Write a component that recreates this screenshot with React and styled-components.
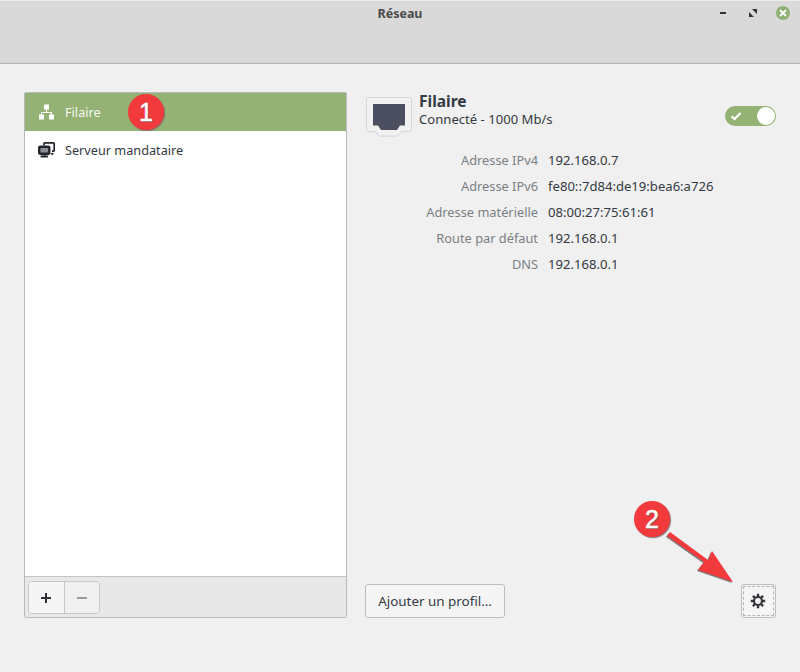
import React from 'react';
import styled, { createGlobalStyle } from 'styled-components';

const Global = createGlobalStyle`
  html, body { margin: 0; padding: 0; background: #f0f0f0; }
  #root { width: 800px; height: 672px; }
  * { box-sizing: border-box; }
`;

const Window = styled.div`
  position: relative;
  width: 800px;
  height: 672px;
  overflow: hidden;
  background: #f0f0f0;
  display: flex;
  flex-direction: column;
  font-family: "Noto Sans", "Open Sans", sans-serif;
  font-size: 13px;
  color: #333a44;
`;

const TitleBar = styled.header`
  position: relative;
  flex: 0 0 64px;
  background: #d9d9d9;
  border-top: 1px solid #ececec;
  border-bottom: 1px solid #b5b5b5;
  padding-top: 4px;
  text-align: center;
  font-size: 12.5px;
  font-weight: 700;
  line-height: 17px;
  color: #4a4a4a;
`;

const WindowControls = styled.div`
  position: absolute;
  top: 4px;
  right: 10px;
  display: flex;
  align-items: center;
  gap: 16px;
`;

const ControlSlot = styled.span`
  width: 14px;
  height: 16px;
  display: flex;
  align-items: center;
  justify-content: center;
`;

const CloseSlot = styled.span`
  width: 14px;
  height: 14px;
  border-radius: 50%;
  background: #8fb174;
  display: flex;
  align-items: center;
  justify-content: center;
`;

const Body = styled.main`
  flex: 1;
  display: flex;
  gap: 18px;
  padding: 28px 24px 54px;
`;

const Sidebar = styled.aside`
  width: 323px;
  display: flex;
  flex-direction: column;
  border: 1px solid #b9b9b9;
  border-radius: 2px;
  background: #fff;
`;

const List = styled.ul`
  flex: 1;
  list-style: none;
  margin: 0;
  padding: 0;
`;

const Row = styled.li`
  height: 38px;
  display: flex;
  align-items: center;
  gap: 10px;
  padding-left: 13px;
  background: ${p => (p.$selected ? '#93b273' : 'transparent')};
  color: ${p => (p.$selected ? '#f5f8f1' : '#333a44')};
  font-size: 12.7px;
`;

const Toolbar = styled.div`
  flex: 0 0 41px;
  display: flex;
  align-items: center;
  padding: 1px 3px 0;
  background: #e8e8e8;
  border-top: 1px solid #c4c4c4;
`;

const ButtonGroup = styled.div`
  display: flex;
  height: 33px;
  border: 1px solid #c8c8c8;
  border-radius: 4px;
  overflow: hidden;
`;

const ToolButton = styled.button`
  width: ${p => (p.$muted ? '34px' : '36px')};
  padding: ${p => (p.$muted ? '0' : '0 2px 0 0')};
  border: 0;
  border-right: ${p => (p.$muted ? '0' : '1px solid #c4c4c4')};
  background: ${p => (p.$muted ? '#f0f0f0' : '#f5f5f5')};
  display: flex;
  align-items: center;
  justify-content: center;
`;

const Panel = styled.section`
  flex: 1;
  display: flex;
  flex-direction: column;
`;

const Header = styled.div`
  display: flex;
  align-items: flex-start;
  padding-left: 1px;
  padding-top: 5px;
  height: 56px;
`;

const HeaderText = styled.div`
  margin-left: 7px;
  flex: 1;
  margin-top: -5px;
`;

const HeaderTitle = styled.div`
  font-size: 15.5px;
  font-weight: 700;
  line-height: 19px;
  color: #333a44;
`;

const HeaderStatus = styled.div`
  font-size: 13.1px;
  line-height: 16px;
`;

const Switch = styled.div`
  margin-top: 9px;
  width: 51px;
  height: 20px;
  border-radius: 10px;
  background: #93b273;
  display: flex;
  align-items: center;
  justify-content: space-between;
  padding: 0 1px 0 5px;
`;

const Knob = styled.span`
  width: 18px;
  height: 18px;
  border-radius: 50%;
  background: #fff;
`;

const Details = styled.dl`
  margin: 0;
  margin-top: -1px;
  display: grid;
  grid-template-columns: 173px auto;
  grid-auto-rows: 26px;
  column-gap: 10px;
  align-items: center;
  justify-content: start;
`;

const Label = styled.dt`
  text-align: right;
  color: #7b7f84;
  font-size: 12.8px;
`;

const Value = styled.dd`
  margin: 0;
  font-size: 13.1px;
  color: #333a44;
`;

const Footer = styled.div`
  margin-top: auto;
  display: flex;
  justify-content: space-between;
`;

const TextButton = styled.button`
  width: 140px;
  height: 34px;
  padding: 0;
  border: 1px solid #bdbdbd;
  border-radius: 3px;
  background: #f5f5f5;
  font-family: inherit;
  font-size: 13.4px;
  color: #333a44;
`;

const GearButton = styled.button`
  width: 35px;
  height: 34px;
  padding: 0 1px 0 0;
  border: 1px solid #bdbdbd;
  border-radius: 3px;
  background: #f5f5f5;
  display: flex;
  align-items: center;
  justify-content: center;
  outline: 1px dashed #b5b5b5;
  outline-offset: -3px;
`;

const Badge = styled.div`
  position: absolute;
  left: ${p => p.$x - 18}px;
  top: ${p => p.$y - 18}px;
  width: 36px;
  height: 36px;
  border-radius: 50%;
  background: #f23a3c;
  box-shadow: 1px 1px 1px #8a6a6a;
  display: flex;
  align-items: center;
  justify-content: center;
  font-family: "Liberation Sans", Arial, sans-serif;
  font-size: 25px;
  font-weight: 400;
  -webkit-text-stroke: 0.5px #fff;
  color: #fff;
  text-shadow: 1px 1px 1px #7d5050;
`;

const ArrowLayer = styled.svg`
  position: absolute;
  left: 660px;
  top: 525px;
`;

const NetworkIcon = () => (
  <svg width="17" height="16" viewBox="0 0 17 16" fill="#fff">
    <rect x="6" y="0.5" width="5" height="5" />
    <rect x="1" y="10.5" width="5" height="5" />
    <rect x="11" y="10.5" width="5" height="5" />
    <path d="M8 5h1v3h5v3h-1V9H4v2H3V8h5z" />
  </svg>
);

const ProxyIcon = () => (
  <svg width="17" height="16" viewBox="0 0 17 16" fill="none">
    <path d="M6 3.5V1.8A1 1 0 0 1 7 .8h8.2a1 1 0 0 1 1 1v6.4a1 1 0 0 1-1 1H14" stroke="#22252b" strokeWidth="1.7" />
    <rect x="1.2" y="4.7" width="10.1" height="7.1" rx="1" fill="#8b8e94" stroke="#22252b" strokeWidth="2.4" />
    <rect x="4.5" y="12" width="3.5" height="1.5" fill="#22252b" />
    <rect x="2.5" y="13.5" width="7.5" height="2" rx="0.5" fill="#22252b" />
    <path d="M12.5 11h3.5l-1.7 2.6z" fill="#22252b" />
  </svg>
);

const EthernetIcon = () => (
  <svg width="46" height="40" viewBox="0 0 46 40">
    <path
      d="M3 .5h40a2.5 2.5 0 0 1 2.5 2.5v29a2.5 2.5 0 0 1-2.5 2.5h-7.5l-3 4a1.5 1.5 0 0 1-1.2.6H13.7a1.5 1.5 0 0 1-1.2-.6l-3-4H3A2.5 2.5 0 0 1 .5 32V3A2.5 2.5 0 0 1 3 .5z"
      fill="#f2f2f2"
      stroke="#d2d6e0"
    />
    <path d="M7 7h32v21.5h-5l-3 4.5H15l-3-4.5H7z" fill="#4b4f5f" />
  </svg>
);

const CheckIcon = () => (
  <svg width="12" height="10" viewBox="0 0 12 10" fill="none">
    <path d="M1.5 5.2 4.5 8l6-6" stroke="#fff" strokeWidth="2.2" />
  </svg>
);

const PlusIcon = ({ color, plus }) => (
  <svg width="12" height="12" viewBox="0 0 12 12" fill={color}>
    <rect x="1" y="5" width="10" height="2" />
    {plus && <rect x="5" y="1" width="2" height="10" />}
  </svg>
);

const GearIcon = () => (
  <svg width="16" height="16" viewBox="0 0 16 16" fill="none" stroke="#33363b">
    <circle cx="8" cy="8" r="4" strokeWidth="2.2" />
    <g strokeWidth="2.4">
      <path d="M8 .8v3M8 12.2v3M.8 8h3M12.2 8h3" />
      <path d="M2.9 2.9l2.1 2.1M11 11l2.1 2.1M13.1 2.9L11 5M5 11l-2.1 2.1" />
    </g>
  </svg>
);

const MinimizeIcon = () => (
  <svg width="8" height="3" viewBox="0 0 8 3"><rect width="6" height="2" x="1" fill="#333" /></svg>
);

const MaximizeIcon = () => (
  <svg width="8" height="8" viewBox="0 0 8 8" fill="#333">
    <path d="M3 0h5v5zM0 3l5 5H0z" />
  </svg>
);

const CloseIcon = () => (
  <svg width="8" height="8" viewBox="0 0 8 8"><path d="M1 1l6 6M7 1 1 7" stroke="#fff" strokeWidth="1.8" /></svg>
);

const details = [
  ['Adresse IPv4', '192.168.0.7'],
  ['Adresse IPv6', 'fe80::7d84:de19:bea6:a726'],
  ['Adresse matérielle', '08:00:27:75:61:61'],
  ['Route par défaut', '192.168.0.1'],
  ['DNS', '192.168.0.1'],
];

export default function App() {
  return (
    <Window>
      <Global />
      <TitleBar>
        Réseau
        <WindowControls>
          <ControlSlot><MinimizeIcon /></ControlSlot>
          <ControlSlot><MaximizeIcon /></ControlSlot>
          <CloseSlot><CloseIcon /></CloseSlot>
        </WindowControls>
      </TitleBar>
      <Body>
        <Sidebar>
          <List>
            <Row $selected><NetworkIcon />Filaire</Row>
            <Row><ProxyIcon />Serveur mandataire</Row>
          </List>
          <Toolbar>
            <ButtonGroup>
              <ToolButton><PlusIcon color="#2e3138" plus /></ToolButton>
              <ToolButton $muted><PlusIcon color="#9a9a9a" /></ToolButton>
            </ButtonGroup>
          </Toolbar>
        </Sidebar>
        <Panel>
          <Header>
            <EthernetIcon />
            <HeaderText>
              <HeaderTitle>Filaire</HeaderTitle>
              <HeaderStatus>Connecté - 1000 Mb/s</HeaderStatus>
            </HeaderText>
            <Switch><CheckIcon /><Knob /></Switch>
          </Header>
          <Details>
            {details.map(([k, v]) => (
              <React.Fragment key={k}>
                <Label>{k}</Label>
                <Value>{v}</Value>
              </React.Fragment>
            ))}
          </Details>
          <Footer>
            <TextButton>Ajouter un profil…</TextButton>
            <GearButton><GearIcon /></GearButton>
          </Footer>
        </Panel>
      </Body>
      <Badge $x={146} $y={112}>1</Badge>
      <Badge $x={652} $y={519}>2</Badge>
      <ArrowLayer width="80" height="65" viewBox="660 525 80 65">
        <path d="M667 536l3-4 38 28 4-9 21 31-35-12 6-8z" fill="#7d7d7d" transform="translate(-1 1)" />
        <path d="M667 536l3-4 38 28 4-9 21 31-35-12 6-8z" fill="#f23a3c" />
      </ArrowLayer>
    </Window>
  );
}
